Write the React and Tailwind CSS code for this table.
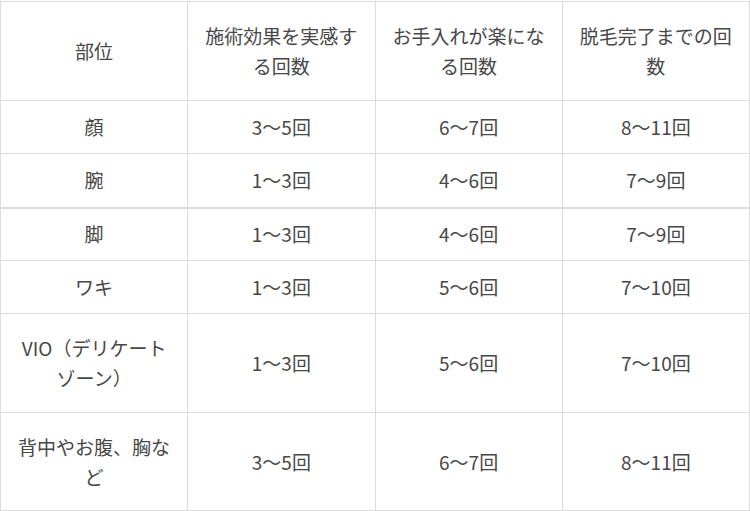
const rows = [
  { part: '顔', a: '3〜5回', b: '6〜7回', c: '8〜11回', h: 'h-[53px]' },
  { part: '腕', a: '1〜3回', b: '4〜6回', c: '7〜9回', h: 'h-[54px]', thick: true },
  { part: '脚', a: '1〜3回', b: '4〜6回', c: '7〜9回', h: 'h-[53px]' },
  { part: 'ワキ', a: '1〜3回', b: '5〜6回', c: '7〜10回', h: 'h-[53px]' },
  { part: 'VIO（デリケートゾーン）', a: '1〜3回', b: '5〜6回', c: '7〜10回', h: 'h-[99px]' },
  { part: '背中やお腹、胸など', a: '3〜5回', b: '6〜7回', c: '8〜11回', h: 'h-[98px]' },
];

const cell = 'border border-[#dcdcdc] px-[14px] py-0 text-center align-middle';

export default function App() {
  return (
    <div className="w-[750px] h-[511px] bg-white pt-px">
      <table
        className="w-[750px] table-fixed border-collapse text-[19px] leading-[30px] text-[#474747]"
        style={{ fontFamily: '"Noto Sans CJK JP", "Noto Sans", sans-serif' }}
      >
        <thead>
          <tr className="h-[99px]">
            <th className={`${cell} font-normal`}>部位</th>
            <th className={`${cell} font-normal`}>施術効果を実感する回数</th>
            <th className={`${cell} font-normal`}>お手入れが楽になる回数</th>
            <th className={`${cell} font-normal`}>脱毛完了までの回数</th>
          </tr>
        </thead>
        <tbody>
          {rows.map((r, i) => {
            const c = r.thick ? `${cell} border-b-2` : cell;
            return (
              <tr key={i} className={r.h}>
                <td className={c}>{r.part}</td>
                <td className={c}>{r.a}</td>
                <td className={c}>{r.b}</td>
                <td className={c}>{r.c}</td>
              </tr>
            );
          })}
        </tbody>
      </table>
    </div>
  );
}
